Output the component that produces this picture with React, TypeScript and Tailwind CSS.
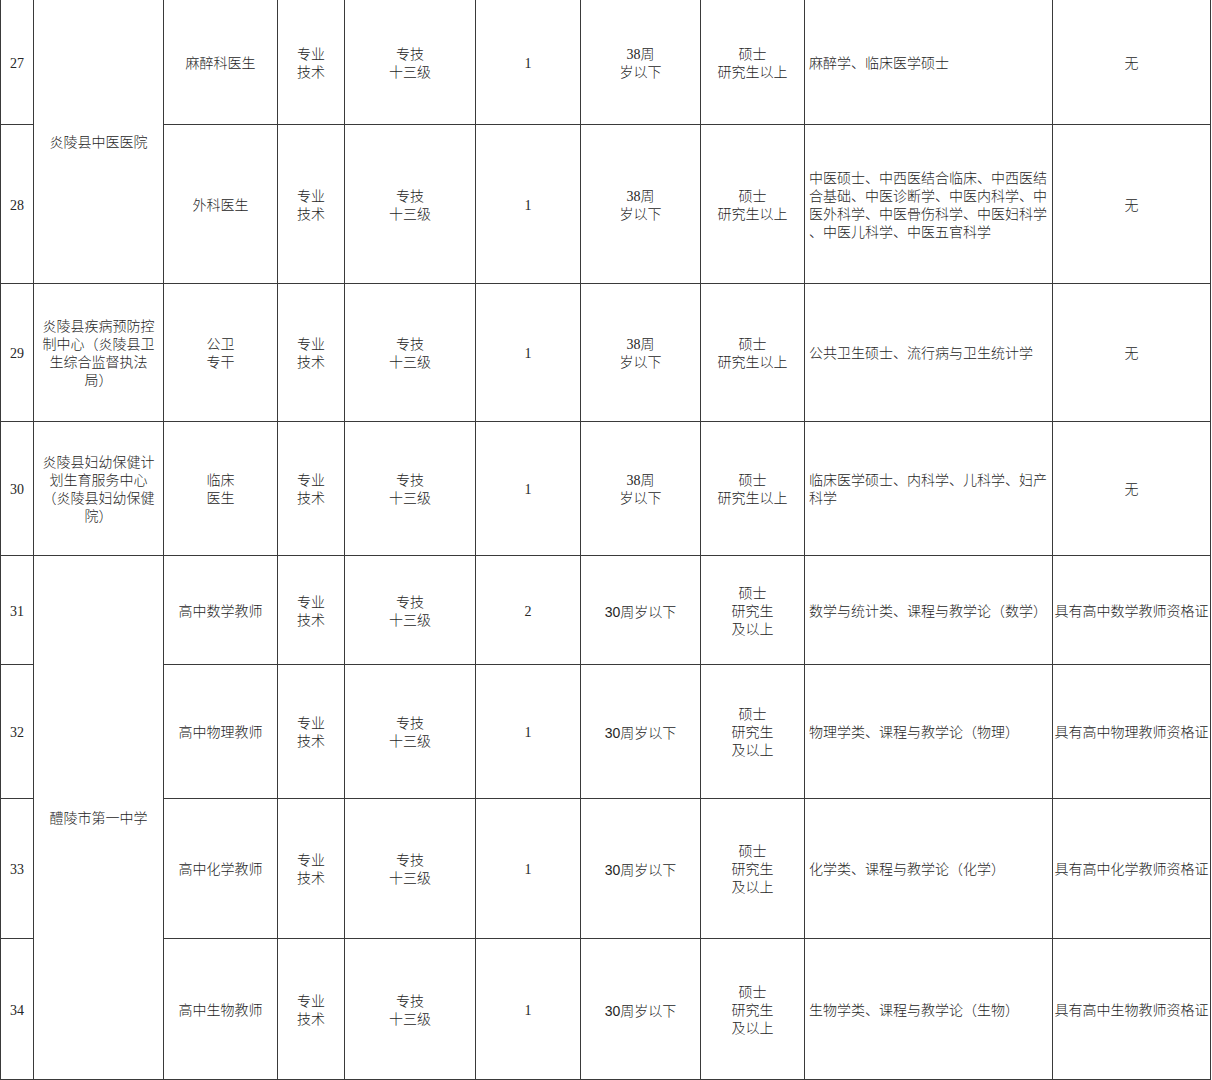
type Row = {
  no: string;
  job: string[];
  kind: string[];
  level: string[];
  count: string;
  age: string[];
  edu: string[];
  major: string[];
  cert: string;
};

const ROWS: Row[] = [
  {
    no: '27',
    job: ['麻醉科医生'],
    kind: ['专业', '技术'],
    level: ['专技', '十三级'],
    count: '1',
    age: ['38周', '岁以下'],
    edu: ['硕士', '研究生以上'],
    major: ['麻醉学、临床医学硕士'],
    cert: '无',
  },
  {
    no: '28',
    job: ['外科医生'],
    kind: ['专业', '技术'],
    level: ['专技', '十三级'],
    count: '1',
    age: ['38周', '岁以下'],
    edu: ['硕士', '研究生以上'],
    major: [
      '中医硕士、中西医结合临床、中西医结',
      '合基础、中医诊断学、中医内科学、中',
      '医外科学、中医骨伤科学、中医妇科学',
      '、中医儿科学、中医五官科学',
    ],
    cert: '无',
  },
  {
    no: '29',
    job: ['公卫', '专干'],
    kind: ['专业', '技术'],
    level: ['专技', '十三级'],
    count: '1',
    age: ['38周', '岁以下'],
    edu: ['硕士', '研究生以上'],
    major: ['公共卫生硕士、流行病与卫生统计学'],
    cert: '无',
  },
  {
    no: '30',
    job: ['临床', '医生'],
    kind: ['专业', '技术'],
    level: ['专技', '十三级'],
    count: '1',
    age: ['38周', '岁以下'],
    edu: ['硕士', '研究生以上'],
    major: ['临床医学硕士、内科学、儿科学、妇产', '科学'],
    cert: '无',
  },
  {
    no: '31',
    job: ['高中数学教师'],
    kind: ['专业', '技术'],
    level: ['专技', '十三级'],
    count: '2',
    age: ['30周岁以下'],
    edu: ['硕士', '研究生', '及以上'],
    major: ['数学与统计类、课程与教学论（数学）'],
    cert: '具有高中数学教师资格证',
  },
  {
    no: '32',
    job: ['高中物理教师'],
    kind: ['专业', '技术'],
    level: ['专技', '十三级'],
    count: '1',
    age: ['30周岁以下'],
    edu: ['硕士', '研究生', '及以上'],
    major: ['物理学类、课程与教学论（物理）'],
    cert: '具有高中物理教师资格证',
  },
  {
    no: '33',
    job: ['高中化学教师'],
    kind: ['专业', '技术'],
    level: ['专技', '十三级'],
    count: '1',
    age: ['30周岁以下'],
    edu: ['硕士', '研究生', '及以上'],
    major: ['化学类、课程与教学论（化学）'],
    cert: '具有高中化学教师资格证',
  },
  {
    no: '34',
    job: ['高中生物教师'],
    kind: ['专业', '技术'],
    level: ['专技', '十三级'],
    count: '1',
    age: ['30周岁以下'],
    edu: ['硕士', '研究生', '及以上'],
    major: ['生物学类、课程与教学论（生物）'],
    cert: '具有高中生物教师资格证',
  },
];

// unit cells keyed by the row where they start; span is a full class name
const UNITS: Record<number, { span: string; lines: string[] }> = {
  0: { span: 'row-span-2', lines: ['炎陵县中医医院'] },
  2: { span: 'row-span-1', lines: ['炎陵县疾病预防控', '制中心（炎陵县卫', '生综合监督执法', '局）'] },
  3: { span: 'row-span-1', lines: ['炎陵县妇幼保健计', '划生育服务中心', '（炎陵县妇幼保健', '院）'] },
  4: { span: 'row-span-4', lines: ['醴陵市第一中学'] },
};

const cell = 'border-r border-b border-[#3a3a3a] flex items-center pt-[3px]';
const mid = `${cell} justify-center text-center`;

function Lines({ lines }: { lines: string[] }) {
  return (
    <div>
      {lines.map((l, i) => (
        <div key={i} className="whitespace-nowrap">
          {l}
        </div>
      ))}
    </div>
  );
}

export default function App() {
  return (
    <div className="w-[1212px] h-[1080px] overflow-hidden bg-white text-[14px] leading-[18px] text-[#262626] font-['Liberation_Serif','Noto_Sans_CJK_SC',serif]">
      <div className="grid grid-cols-[34px_130px_114px_67px_131px_105px_120px_104px_248px_158px] grid-rows-[125px_159px_138px_134px_109px_134px_140px_141px] font-light">
        {ROWS.map((r, i) => {
          const unit = UNITS[i];
          const teen = i >= 4;
          return [
            <div key={`no${i}`} className={`${cell} border-l justify-center`}>
              {r.no}
            </div>,
            unit ? (
              <div key={`u${i}`} className={`${mid} ${unit.span}`}>
                <Lines lines={unit.lines} />
              </div>
            ) : null,
            <div key={`j${i}`} className={mid}>
              <Lines lines={r.job} />
            </div>,
            <div key={`k${i}`} className={mid}>
              <Lines lines={r.kind} />
            </div>,
            <div key={`l${i}`} className={mid}>
              <Lines lines={r.level} />
            </div>,
            <div key={`c${i}`} className={`${cell} justify-center`}>
              {r.count}
            </div>,
            <div
              key={`a${i}`}
              className={
                teen
                  ? `${mid} font-['Liberation_Sans','Noto_Sans_CJK_SC',sans-serif]`
                  : mid
              }
            >
              <Lines lines={r.age} />
            </div>,
            <div key={`e${i}`} className={mid}>
              <Lines lines={r.edu} />
            </div>,
            <div key={`m${i}`} className={`${cell} pl-[4px]`}>
              <Lines lines={r.major} />
            </div>,
            <div key={`z${i}`} className={mid}>
              {r.cert}
            </div>,
          ];
        })}
      </div>
    </div>
  );
}
